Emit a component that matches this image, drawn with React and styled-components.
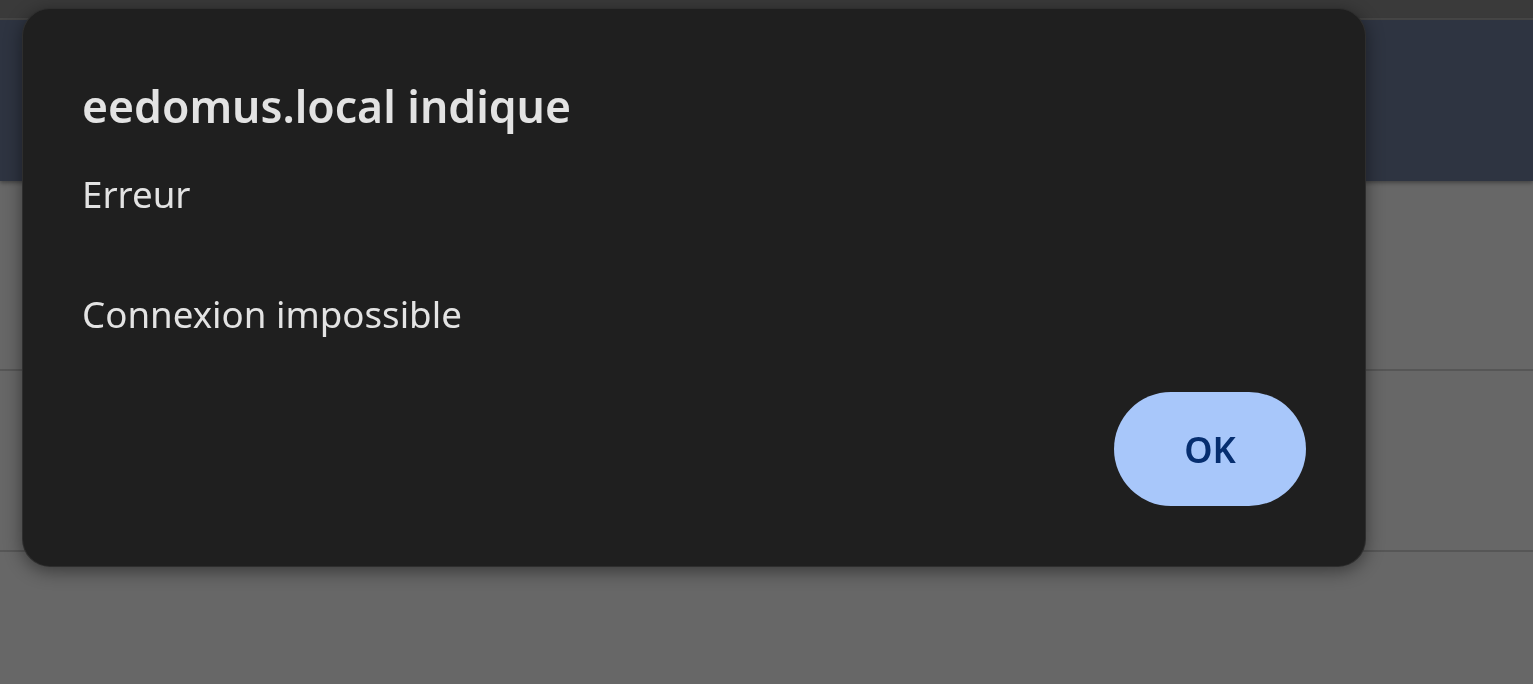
import React from 'react';
import styled, { createGlobalStyle } from 'styled-components';

const GlobalStyle = createGlobalStyle`
  html, body {
    margin: 0;
    padding: 0;
    height: 100%;
    background: #676767;
    font-family: "Noto Sans", "Open Sans", Arial, sans-serif;
    overflow: hidden;
  }
  #root {
    height: 100%;
  }
`;

const Page = styled.div`
  display: flex;
  flex-direction: column;
  height: 100vh;
  background: #676767;
`;

const TabStrip = styled.div`
  flex-shrink: 0;
  height: 18px;
  background: #3a3a3a;
  border-bottom: 2px solid #474747;
`;

const Header = styled.div`
  flex-shrink: 0;
  height: 161px;
  background: #2e3441;
  box-shadow: 0 2px 4px rgba(0, 0, 0, 0.35);
  position: relative;
  z-index: 1;
`;

const Row = styled.div`
  flex-shrink: 0;
  height: ${(p) => p.$height}px;
  border-bottom: 2px solid #565656;
`;

const Rest = styled.div`
  flex: 1;
  min-height: 0;
`;

const Overlay = styled.div`
  position: fixed;
  top: 8px;
  left: 22px;
  width: 1344px;
  z-index: 10;
`;

const Dialog = styled.div`
  box-sizing: border-box;
  display: flex;
  flex-direction: column;
  padding: 69px 59px 60px 59px;
  background: #1f1f1f;
  border: 1px solid rgba(255, 255, 255, 0.07);
  border-radius: 28px;
  box-shadow: 0 4px 18px rgba(0, 0, 0, 0.45);
  color: #e3e3e3;
`;

const Title = styled.h1`
  margin: 0;
  font-size: 44.5px;
  line-height: 56px;
  font-weight: 600;
  color: #e3e3e3;
`;

const Message = styled.p`
  margin: 30px 0 0 0;
  font-size: 36.7px;
  line-height: 60px;
  font-weight: 400;
  white-space: pre-wrap;
  color: #e3e3e3;
`;

const Actions = styled.div`
  display: flex;
  justify-content: flex-end;
  margin-top: 48px;
`;

const OkButton = styled.button`
  width: 192px;
  height: 114px;
  border: none;
  border-radius: 57px;
  background: #a8c7fa;
  color: #062e6f;
  font-family: inherit;
  font-size: 36px;
  font-weight: 600;
  cursor: pointer;
`;

export default function App() {
  return (
    <>
      <GlobalStyle />
      <Page>
        <TabStrip />
        <Header />
        <Row $height={188} />
        <Row $height={179} />
        <Rest />
      </Page>
      <Overlay>
        <Dialog role="alertdialog">
          <Title>eedomus.local indique</Title>
          <Message>{'Erreur\n\nConnexion impossible'}</Message>
          <Actions>
            <OkButton>OK</OkButton>
          </Actions>
        </Dialog>
      </Overlay>
    </>
  );
}
